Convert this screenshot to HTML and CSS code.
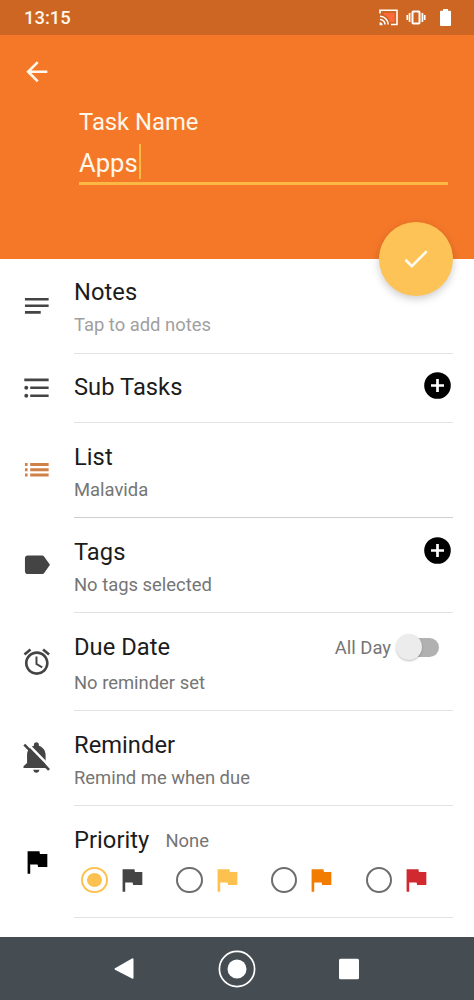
FILE: index.html
```html
<!DOCTYPE html>
<html lang="en">
<head>
  <meta charset="UTF-8" />
  <meta name="viewport" content="width=device-width, initial-scale=1.0" />
  <title>Edit Task</title>
  <link rel="stylesheet" href="styles.css">
</head>
<body>
  <header class="header">
    <div class="status-bar">
      <span class="clock">13:15</span>
      <div class="status-icons">
        <svg width="19" height="17" viewBox="0 0 19 17">
          <path d="M5 4h10.500v9H11C10.500 9 8 6.500 5 6z" fill="#ff6a3c"/>
          <path d="M1 4.500V1.200h17v14.300h-6M1 7.300a8.200 8.200 0 0 1 8.200 8.200M1 10.500a5 5 0 0 1 5 5" fill="none" stroke="#fff" stroke-width="1.600"/>
          <path d="M.6 13.200a3 3 0 0 1 3 3h-3z" fill="#fff"/>
        </svg>
        <svg width="20" height="17" viewBox="0 0 20 17">
          <rect x="6.500" y="2.500" width="7" height="12" rx="0.800" fill="none" stroke="#fff" stroke-width="2"/>
          <path d="M3.600 4v9M16.400 4v9M1.300 6v5M18.700 6v5" stroke="#fff" stroke-width="1.700"/>
        </svg>
        <svg class="battery" width="11" height="17" viewBox="0 0 11 17">
          <path d="M3 0h5v1.800h2q1 0 1 1V16q0 1-1 1H1q-1 0-1-1V2.800q0-1 1-1h2z" fill="#fff"/>
        </svg>
      </div>
    </div>
    <svg class="icon back" viewBox="0 0 24 24"><path d="M20 11H7.830l5.590-5.590L12 4l-8 8 8 8 1.410-1.410L7.830 13H20v-2z"/></svg>
    <div class="task-name">
      <div class="task-label">Task Name</div>
      <div class="task-input"><span>Apps</span><i class="caret"></i></div>
    </div>
    <div class="fab">
      <svg class="icon" viewBox="0 0 24 24"><path d="M9 16.170L4.830 12l-1.420 1.410L9 19 21 7l-1.410-1.410z"/></svg>
    </div>
  </header>

  <main class="rows">
    <section class="row notes">
      <svg class="icon" viewBox="0 0 24 24"><path d="M3 6h18v2H3zM3 11h18v2H3zM3 16h12v2H3z"/></svg>
      <div class="body">
        <div class="title">Notes</div>
        <div class="sub hint">Tap to add notes</div>
      </div>
    </section>

    <section class="row subtasks">
      <svg class="icon" viewBox="0 0 24 24">
        <path d="M2.500 5h18.500v2H2.500zM7 11h14v2H7zM7 17h14v2H7z"/>
        <circle cx="4" cy="12" r="1.500"/><circle cx="4" cy="18" r="1.500"/>
      </svg>
      <div class="body">
        <div class="line">
          <div class="title">Sub Tasks</div>
          <svg class="plus" viewBox="0 0 27 27"><circle cx="13.500" cy="13.500" r="13.300"/><path d="M13.500 7v13M7 13.500h13" stroke="#fff" stroke-width="2.700"/></svg>
        </div>
      </div>
    </section>

    <section class="row list">
      <svg class="icon" viewBox="0 0 24 24"><path d="M3 6.900h2v2.200H3zM3 10.900h2v2.200H3zM3 14.900h2v2.200H3zM7 6.900h14v2.200H7zM7 10.900h14v2.200H7zM7 14.900h14v2.200H7z"/></svg>
      <div class="body">
        <div class="title">List</div>
        <div class="sub">Malavida</div>
      </div>
    </section>

    <section class="row tags">
      <svg class="icon" viewBox="0 0 24 24"><path d="M17.630 5.840C17.270 5.330 16.670 5 16 5L5 5.010C3.900 5.010 3 5.900 3 7v10c0 1.100.9 1.990 2 1.990L16 19c.67 0 1.270-.33 1.630-.84L22 12l-4.370-6.160z"/></svg>
      <div class="body">
        <div class="line">
          <div class="title">Tags</div>
          <svg class="plus" viewBox="0 0 27 27"><circle cx="13.500" cy="13.500" r="13.300"/><path d="M13.500 7v13M7 13.500h13" stroke="#fff" stroke-width="2.700"/></svg>
        </div>
        <div class="sub">No tags selected</div>
      </div>
    </section>

    <section class="row due">
      <svg class="icon" viewBox="0 0 24 24"><path d="M22 5.720l-4.600-3.860-1.290 1.530 4.600 3.860L22 5.720zM7.880 3.390L6.600 1.860 2 5.710l1.290 1.530 4.590-3.850zM12.500 8H11v6l4.750 2.850.75-1.230-4-2.370V8zM12 4c-4.970 0-9 4.030-9 9s4.020 9 9 9c4.970 0 9-4.030 9-9s-4.030-9-9-9zm0 16c-3.870 0-7-3.130-7-7s3.130-7 7-7 7 3.130 7 7-3.130 7-7 7z"/></svg>
      <div class="body">
        <div class="line">
          <div class="title">Due Date</div>
          <div class="all-day">
            <span>All Day</span>
            <div class="switch"><div class="thumb"></div></div>
          </div>
        </div>
        <div class="sub">No reminder set</div>
      </div>
    </section>

    <section class="row reminder">
      <svg class="icon" viewBox="0 0 24 24">
        <path d="M9.300 21h4.700c-.2 1.500-1.100 2.300-2.350 2.300S9.500 22.500 9.300 21z"/>
        <path d="M11.700.2c-1.100 0-1.900.8-1.900 1.900v.8C6.500 3.900 4.600 6.700 4.600 10v6l-2.700 2.500v1.300H20v-1.300L18.700 17v-7c0-3.300-1.900-6.100-5.100-7.100v-.8c0-1.100-.8-1.900-1.900-1.900z"/>
        <path d="M4.500 .8L22.500 19.300" stroke="#fff" stroke-width="1.900"/>
        <path d="M2.500 2L21.300 21.200" stroke="#444" stroke-width="2"/>
      </svg>
      <div class="body">
        <div class="title">Reminder</div>
        <div class="sub">Remind me when due</div>
      </div>
    </section>

    <section class="row priority">
      <svg class="icon flag" viewBox="0 0 24 24"><path d="M14.400 6L14 4H5v17h2v-7h5.600l.4 2h7V6z"/></svg>
      <div class="body">
        <div class="line start">
          <div class="title">Priority</div>
          <div class="sub">None</div>
        </div>
        <div class="options">
          <div class="option">
            <span class="radio checked"></span>
            <svg class="icon flag" viewBox="0 0 24 24"><path d="M14.400 6L14 4H5v17h2v-7h5.600l.4 2h7V6z"/></svg>
          </div>
          <div class="option low">
            <span class="radio"></span>
            <svg class="icon flag" viewBox="0 0 24 24"><path d="M14.400 6L14 4H5v17h2v-7h5.600l.4 2h7V6z"/></svg>
          </div>
          <div class="option medium">
            <span class="radio"></span>
            <svg class="icon flag" viewBox="0 0 24 24"><path d="M14.400 6L14 4H5v17h2v-7h5.600l.4 2h7V6z"/></svg>
          </div>
          <div class="option high">
            <span class="radio"></span>
            <svg class="icon flag" viewBox="0 0 24 24"><path d="M14.400 6L14 4H5v17h2v-7h5.600l.4 2h7V6z"/></svg>
          </div>
        </div>
      </div>
    </section>
  </main>

  <nav class="nav-bar">
    <svg width="38" height="38" viewBox="0 0 38 38"><path d="M9 18.200L26 8.500q1.500-.7 1.500.8v18.400q0 1.500-1.500.8L9 19.800q-1.200-.8 0-1.600z"/></svg>
    <svg width="38" height="38" viewBox="0 0 38 38"><circle cx="19" cy="19" r="17.600" fill="none" stroke="#fff" stroke-width="1.700"/><circle cx="19" cy="19" r="9.500"/></svg>
    <svg width="38" height="38" viewBox="0 0 38 38"><rect x="9" y="8.800" width="20" height="20.400" rx="1.500"/></svg>
  </nav>
</body>
</html>
```

FILE: styles.css
```css
* {
  box-sizing: border-box;
}
body {
  margin: 0;
  width: 474px;
  height: 1000px;
  display: flex;
  flex-direction: column;
  overflow: hidden;
  background: #fff;
  color: #1c1c1c;
  font-family: Roboto, sans-serif;
}
svg {
  display: block;
  flex: none;
}
.icon {
  width: 31.6px;
  height: 31.6px;
  fill: #444;
}

/* header */
.header {
  position: relative;
  height: 259px;
  background: #f57829;
  color: #fff7ea;
}
.status-bar {
  height: 35px;
  padding: 0 23px 0 24px;
  display: flex;
  align-items: center;
  justify-content: space-between;
  background: #cd6623;
}
.clock {
  font-size: 18.4px;
  font-weight: 500;
  line-height: 35px;
}
.status-icons {
  display: flex;
  align-items: center;
  gap: 8px;
}
.battery {
  margin-left: 6px;
}
.back {
  margin: 21px 0 0 21px;
  fill: #fff7ea;
}
.task-name {
  margin: 20px 26px 0 79px;
}
.task-label {
  font-size: 23.8px;
  line-height: 29px;
}
.task-input {
  height: 48px;
  padding-top: 7px;
  display: flex;
  border-bottom: 3px solid #fdb844;
  font-size: 25.6px;
  line-height: 38px;
}
.caret {
  width: 2px;
  height: 35px;
  margin-left: 1px;
  background: #fdbb45;
}
.fab {
  position: absolute;
  right: 21px;
  bottom: -37px;
  width: 74px;
  height: 74px;
  display: flex;
  align-items: center;
  justify-content: center;
  border-radius: 50%;
  background: #fdc357;
  box-shadow: 0 3px 8px rgba(0, 0, 0, 0.2);
}
.fab .icon {
  fill: #fffbee;
}

/* rows */
.rows {
  flex: 1;
}
.row {
  height: 95px;
  padding: 0 21px;
  display: flex;
  align-items: center;
}
.row > .icon {
  margin-bottom: 1px;
}
.body {
  flex: 1;
  align-self: stretch;
  margin-left: 21.4px;
  padding-top: 20px;
  border-bottom: 1px solid #e2e2e2;
}
.title {
  font-size: 23.7px;
  line-height: 28px;
  letter-spacing: 0.05px;
}
.sub {
  margin-top: 8px;
  font-size: 18.4px;
  line-height: 22px;
  color: #757575;
}
.hint {
  color: #a0a0a0;
}
.line {
  height: 28px;
  display: flex;
  justify-content: space-between;
}
.plus {
  width: 27px;
  height: 27px;
  margin: -1px 2px 0 0;
}
.notes .body,
.subtasks .body {
  padding-top: 19px;
}
.subtasks {
  height: 69px;
}
.list .icon {
  fill: #cf8148;
}
.list .body {
  border-color: #cfcfcf;
}
.due {
  height: 98px;
}
.due .sub {
  margin-top: 11px;
}
.all-day {
  display: flex;
  align-items: center;
  gap: 8px;
  margin-right: 14px;
  font-size: 18.4px;
  color: #757575;
}
.switch {
  width: 40px;
  height: 19px;
  display: flex;
  align-items: center;
  border-radius: 10px;
  background: #b1b1b1;
}
.thumb {
  width: 26px;
  height: 26px;
  flex: none;
  margin-left: -3px;
  border-radius: 50%;
  background: #ececec;
  box-shadow: 0 1px 2px rgba(0, 0, 0, 0.25);
}

/* priority */
.priority {
  height: 112px;
}
.priority > .flag {
  fill: #000;
}
.line.start {
  justify-content: flex-start;
  gap: 16px;
}
.line.start .sub {
  margin-top: 4px;
}
.options {
  display: grid;
  grid-template-columns: repeat(4, 94.8px);
  margin: 10px -21px 0 7.4px;
}
.option {
  display: flex;
  align-items: center;
  gap: 8px;
}
.radio {
  width: 26.4px;
  height: 26.4px;
  border: 2.5px solid #6d6d6d;
  border-radius: 50%;
}
.radio.checked {
  padding: 4px;
  border-color: #fdc14f;
  background: #fdc14f content-box;
}
.low .icon {
  fill: #fdc14f;
}
.medium .icon {
  fill: #f27c00;
}
.high .icon {
  fill: #d02a30;
}

/* system navigation */
.nav-bar {
  height: 63px;
  display: flex;
  align-items: center;
  justify-content: center;
  gap: 74px;
  background: #454d53;
}
.nav-bar svg {
  fill: #fff;
}
```
